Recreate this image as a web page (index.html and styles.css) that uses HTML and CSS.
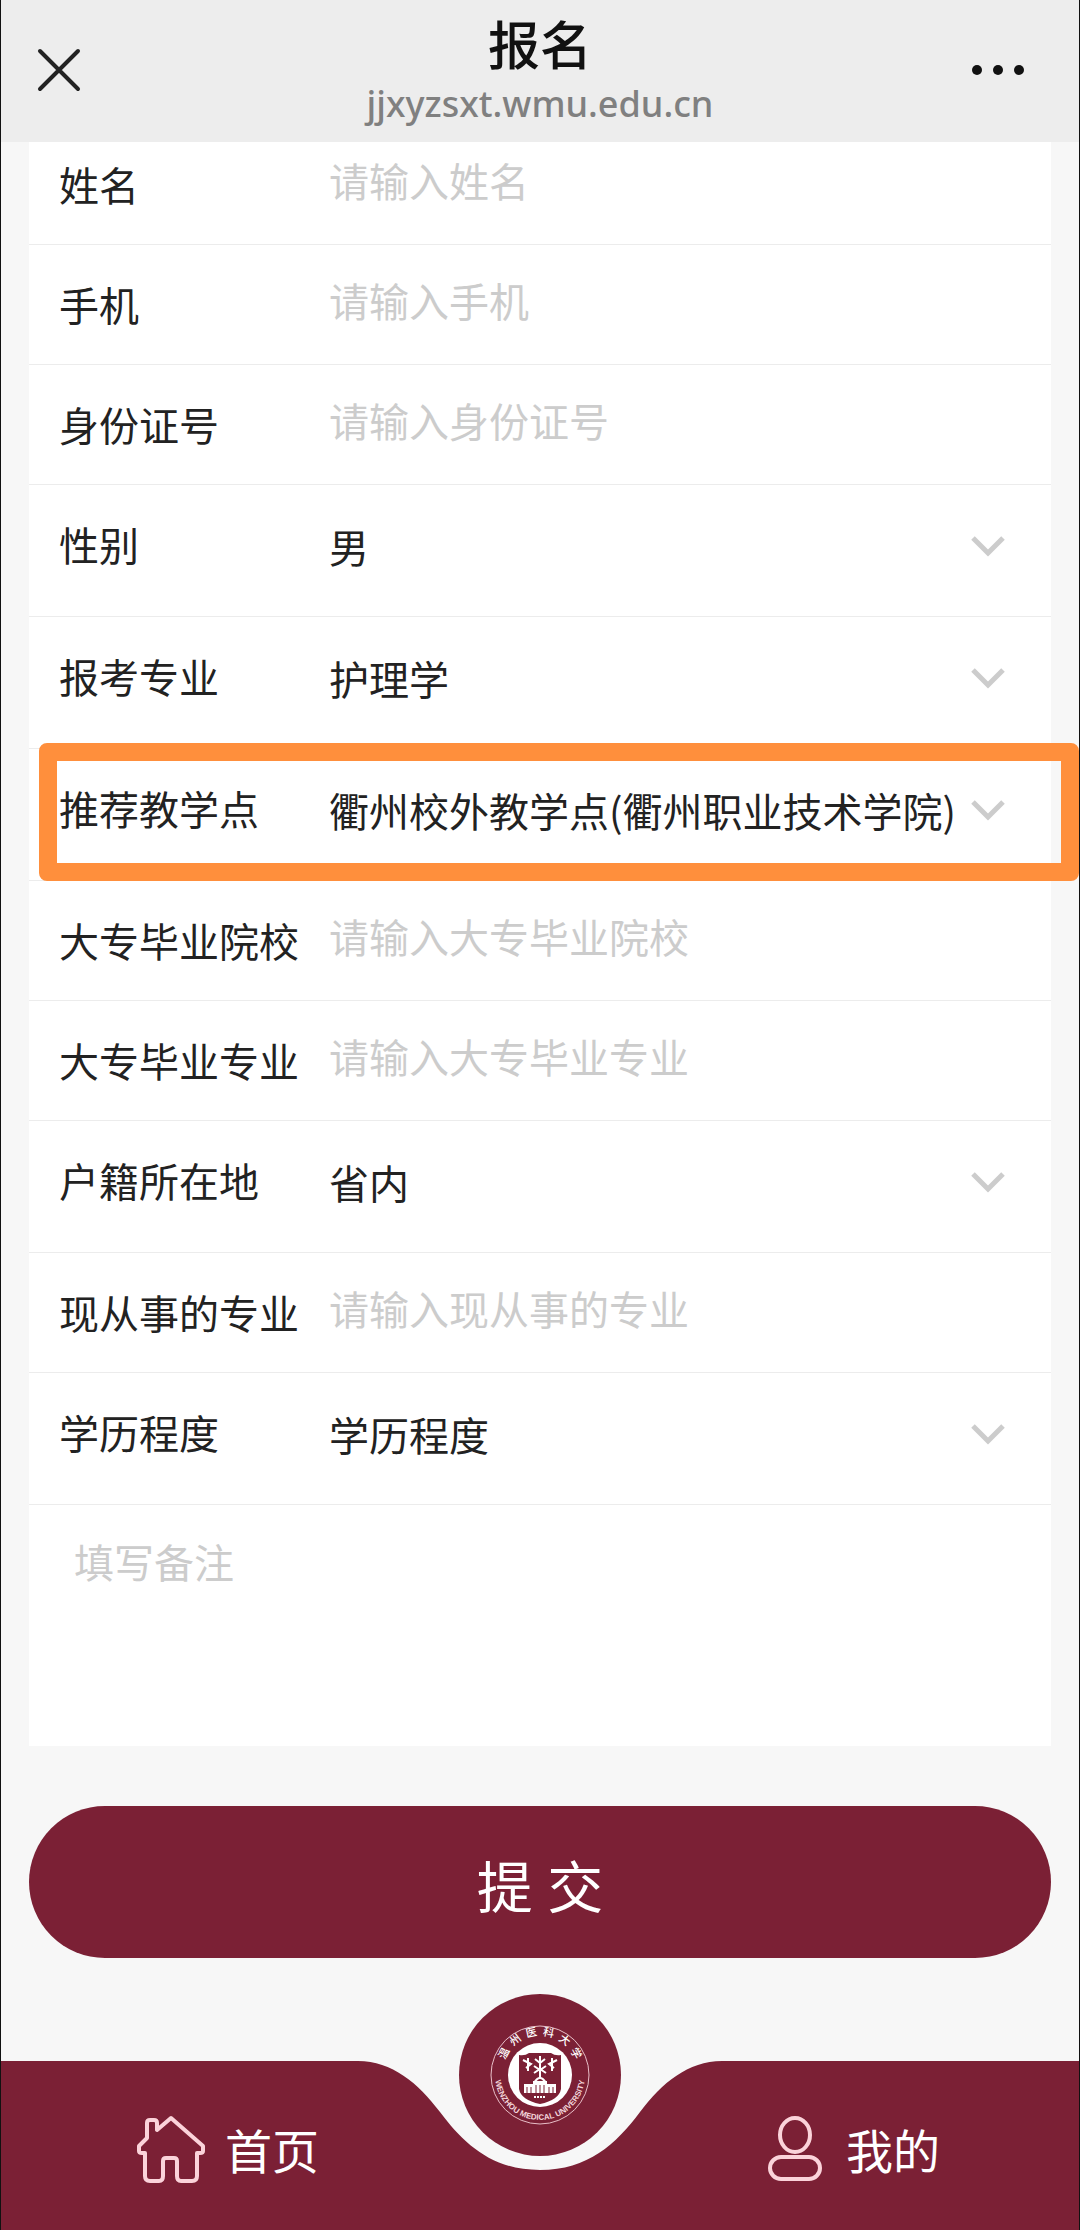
FILE: index.html
```
<!DOCTYPE html>
<html lang="zh-CN">
<head>
  <meta charset="UTF-8">
  <meta name="viewport" content="width=device-width, initial-scale=1.0">
  <title>报名</title>
  <link rel="stylesheet" href="styles.css">
</head>
<body>

  <header class="top-bar">
    <button type="button" class="icon-btn" aria-label="关闭">
      <svg width="44" height="44" viewBox="0 0 44 44" fill="none" stroke="#222" stroke-width="4" stroke-linecap="round"><path d="M3 3L41 41M41 3L3 41"/></svg>
    </button>
    <div class="top-title">
      <h1>报名</h1>
      <p>jjxyzsxt.wmu.edu.cn</p>
    </div>
    <button type="button" class="icon-btn icon-more" aria-label="更多">
      <svg width="54" height="12" viewBox="0 0 54 12" fill="#111"><circle cx="6" cy="6" r="5"/><circle cx="27" cy="6" r="5"/><circle cx="48" cy="6" r="5"/></svg>
    </button>
  </header>

  <form class="apply-form" onsubmit="return false">
    <div class="card">
      <div class="row">
        <label for="name">姓名</label>
        <input type="text" id="name" placeholder="请输入姓名">
      </div>
      <div class="row">
        <label for="phone">手机</label>
        <input type="tel" id="phone" placeholder="请输入手机">
      </div>
      <div class="row">
        <label for="idcard">身份证号</label>
        <input type="text" id="idcard" placeholder="请输入身份证号">
      </div>
      <div class="row">
        <label for="sex">性别</label>
        <select id="sex"><option>男</option><option>女</option></select>
        <svg class="arrow" viewBox="0 0 34 63"><path d="M2 23L17 38L32 23"/></svg>
      </div>
      <div class="row">
        <label for="major">报考专业</label>
        <select id="major"><option>护理学</option></select>
        <svg class="arrow" viewBox="0 0 34 63"><path d="M2 23L17 38L32 23"/></svg>
      </div>
      <div class="row marked">
        <label for="site">推荐教学点</label>
        <select id="site"><option>衢州校外教学点(衢州职业技术学院)</option></select>
        <svg class="arrow" viewBox="0 0 34 63"><path d="M2 23L17 38L32 23"/></svg>
      </div>
      <div class="row">
        <label for="college">大专毕业院校</label>
        <input type="text" id="college" placeholder="请输入大专毕业院校">
      </div>
      <div class="row">
        <label for="college-major">大专毕业专业</label>
        <input type="text" id="college-major" placeholder="请输入大专毕业专业">
      </div>
      <div class="row">
        <label for="region">户籍所在地</label>
        <select id="region"><option>省内</option><option>省外</option></select>
        <svg class="arrow" viewBox="0 0 34 63"><path d="M2 23L17 38L32 23"/></svg>
      </div>
      <div class="row">
        <label for="job">现从事的专业</label>
        <input type="text" id="job" placeholder="请输入现从事的专业">
      </div>
      <div class="row">
        <label for="degree">学历程度</label>
        <select id="degree"><option>学历程度</option></select>
        <svg class="arrow" viewBox="0 0 34 63"><path d="M2 23L17 38L32 23"/></svg>
      </div>
      <textarea class="notes" aria-label="备注" placeholder="填写备注"></textarea>
    </div>

    <button type="submit" class="submit">提 交</button>
  </form>

  <nav class="tab-bar">
    <a href="#home" class="tab tab-home">
      <svg width="68" height="68" viewBox="0 0 68 68"><path d="M34 3L20 15V8Q20 5 17 5H13Q10 5 10 8V23L2 31V36Q2 38 5 38H8V61Q8 66 13 66H22Q26 66 26 61V46Q26 43 29 43H37Q40 43 40 46V61Q40 66 44 66H55Q60 66 60 61V38H63Q66 38 66 36V31Z"/></svg>
      首页
    </a>
    <svg class="notch" viewBox="0 0 380 169"><path d="M0 0H8C42 0 68 22 90 51C114 83 142 109 190 109C238 109 266 83 290 51C312 22 338 0 372 0H380V169H0Z"/></svg>
    <a href="#me" class="tab tab-me">
      <svg width="54" height="68" viewBox="0 0 54 68"><ellipse cx="27" cy="20" rx="15" ry="17"/><rect x="2" y="42" width="50" height="22" rx="11"/></svg>
      我的
    </a>
    <a href="#school" class="school" aria-label="温州医科大学">
      <svg viewBox="0 0 164 164">
        <defs>
          <path id="arc-top" d="M46 88A37 37 0 1 1 118 88"/>
          <path id="arc-bottom" d="M37 82A45 45 0 0 0 127 82"/>
        </defs>
        <circle cx="82" cy="82" r="81" fill="#7b2035"/>
        <circle cx="82" cy="82" r="49" fill="none" stroke="#e8bfc8" stroke-width="1"/>
        <text class="ring-cn" text-anchor="middle"><textPath href="#arc-top" startOffset="50%">温&#160; 州&#160; 医&#160; 科&#160; 大&#160; 学</textPath></text>
        <text class="ring-en" text-anchor="middle"><textPath href="#arc-bottom" startOffset="50%">WENZHOU MEDICAL UNIVERSITY</textPath></text>
        <circle cx="82" cy="82" r="32" fill="#fff"/>
        <path d="M61 62Q67 63 71 60H93Q97 63 103 62V96Q101 107 82 111Q63 107 61 96Z" fill="#7b2035"/>
        <g fill="none" stroke="#fff" stroke-width="2">
          <path d="M65 67L73 71L68 75M70 65V78M99 67L91 71L96 75M94 65V78M77 66L82 70L87 66M82 63V85M76 73L82 77L88 73M76 80L82 76L88 80"/>
          <path d="M76 90Q82 80 88 90"/>
        </g>
        <path d="M66 91H75V88H89V91H98V100H66Z" fill="#fff"/>
        <path d="M69 94V100M73 94V100M78 92V100M82 92V100M86 92V100M91 94V100M95 94V100" stroke="#7b2035" stroke-width="1"/>
        <path d="M76 104H88" stroke="#fff" stroke-width="2" stroke-dasharray="2 1"/>
      </svg>
    </a>
  </nav>

</body>
</html>
```
FILE: styles.css
```
* {
  box-sizing: border-box;
}

body {
  margin: 0;
  min-height: 100vh;
  display: flex;
  flex-direction: column;
  border-left: 1px solid #111;
  border-right: 1px solid #111;
  background: #f7f7f7;
  color: #222;
  font-family: "Noto Sans CJK SC", sans-serif;
  font-size: 40px;
}

input,
select,
textarea,
button {
  font: inherit;
  color: inherit;
  border: none;
  background: none;
  padding: 0;
  margin: 0;
  outline: none;
}

/* top bar */
.top-bar {
  position: sticky;
  top: 0;
  z-index: 2;
  display: grid;
  grid-template-columns: 1fr auto 1fr;
  align-items: center;
  height: 142px;
  padding: 0 36px 2px;
  background: #ededed;
}

.top-title {
  padding-top: 6px;
  text-align: center;
}

.top-title h1 {
  margin: 0;
  font-size: 52px;
  font-weight: 500;
  line-height: 62px;
  color: #111;
}

.top-title p {
  margin: 0;
  font-family: "Noto Sans", sans-serif;
  font-size: 36px;
  font-weight: 500;
  line-height: 60px;
  color: #808080;
}

.icon-btn {
  display: flex;
  align-items: center;
  cursor: pointer;
}

.icon-more {
  justify-self: end;
  margin-right: 18px;
}

/* form */
.apply-form {
  padding: 0 28px;
}

.card {
  margin-top: -17px;
  background: #fff;
}

.row {
  position: relative;
  display: flex;
  align-items: flex-start;
  padding: 28px 46px 28px 30px;
  border-bottom: 1px solid #ececec;
}

.row label {
  width: 270px;
  line-height: 63px;
}

.row input {
  flex: 1;
  min-width: 0;
  height: 54px;
}

.row select {
  flex: 1;
  min-width: 0;
  height: 75px;
  padding-bottom: 10px;
  appearance: none;
}

.arrow {
  width: 34px;
  height: 67px;
  fill: none;
  stroke: #ccc;
  stroke-width: 5;
}

::placeholder {
  color: #ccc;
  opacity: 1;
}

.marked::after {
  content: '';
  position: absolute;
  top: -6px;
  bottom: -1px;
  left: 10px;
  right: -28px;
  border: 18px solid #ff8f3c;
  border-radius: 8px;
  pointer-events: none;
}

.notes {
  display: block;
  width: 100%;
  height: 241px;
  padding: 27px 45px;
  resize: none;
}

.submit {
  display: block;
  width: 100%;
  height: 152px;
  margin: 60px 0 103px;
  padding-top: 2px;
  border-radius: 76px;
  background: #7b2035;
  color: #fff;
  font-family: "Noto Sans", "Noto Sans CJK SC", sans-serif;
  font-size: 56px;
  cursor: pointer;
}

/* bottom tabs */
.tab-bar {
  position: relative;
  display: grid;
  grid-template-columns: 1fr 380px 1fr;
  height: 169px;
  margin-top: auto;
}

.tab {
  display: flex;
  align-items: center;
  gap: 20px;
  padding-top: 6px;
  background: #7b2035;
  color: #fff;
  font-size: 47px;
  text-decoration: none;
}

.tab svg {
  fill: none;
  stroke: #fbd3da;
  stroke-width: 4;
  stroke-linejoin: round;
}

.tab-home {
  justify-content: flex-end;
  padding-right: 31px;
}

.tab-me {
  gap: 24px;
  padding-left: 38px;
}

.notch {
  display: block;
  width: 380px;
  height: 169px;
  fill: #7b2035;
}

.school {
  position: absolute;
  top: -68px;
  left: 50%;
  width: 164px;
  height: 164px;
  margin-left: -82px;
}

.school svg {
  display: block;
}

.ring-cn {
  fill: #fff;
  font-size: 11px;
  font-weight: 500;
}

.ring-en {
  fill: #f3d5db;
  font-family: "Liberation Sans", sans-serif;
  font-size: 8px;
  font-weight: 700;
}
```
